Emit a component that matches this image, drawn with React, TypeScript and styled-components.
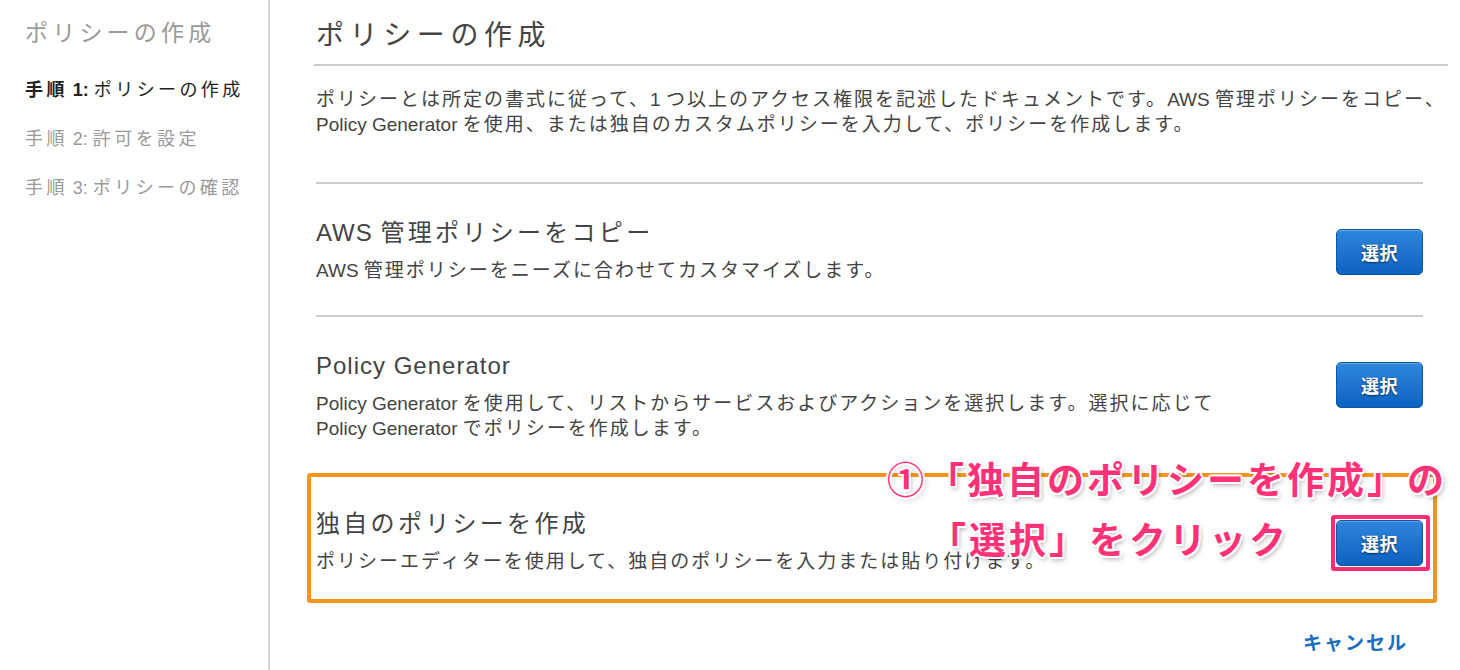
import * as React from 'react'
import styled, { createGlobalStyle, css } from 'styled-components'

const GlobalStyle = createGlobalStyle`
  body {
    margin: 0;
    background: #fff;
    font-family: 'Liberation Sans', 'Noto Sans CJK JP', sans-serif;
    color: #444;
  }
`

// Latin runs keep tight spacing, CJK runs are spread wider like the original rendering
const Latin = styled.span<{ spacing?: number }>`
  letter-spacing: ${({ spacing }) => spacing ?? 0}px;
`

function mixed(text: string, spacing?: number) {
  return text.split(/([\x20-\x7E]+)/).map((part, i) =>
    /^[\x20-\x7E]+$/.test(part) ? (
      <Latin key={i} spacing={spacing}>
        {part}
      </Latin>
    ) : (
      part
    )
  )
}

const Page = styled.div`
  position: relative;
  display: flex;
  width: 1460px;
  min-height: 670px;
  overflow: hidden;
`

const Sidebar = styled.nav`
  flex: 0 0 270px;
  border-right: 2px solid #d4d4d4;
  padding: 16px 0 0 25px;
  box-sizing: border-box;
`

const SidebarTitle = styled.div`
  font-size: 23px;
  line-height: 34px;
  letter-spacing: 4.2px;
  color: #9a9a9a;
`

const StepList = styled.ol`
  list-style: none;
  margin: 25px 0 0;
  padding: 0;
  display: flex;
  flex-direction: column;
  gap: 19px;
`

const Step = styled.li<{ active?: boolean }>`
  font-size: 18px;
  line-height: 30px;
  letter-spacing: 3.4px;
  color: ${({ active }) => (active ? '#222' : '#9a9a9a')};

  b {
    font-weight: 700;
  }
`

const Main = styled.main`
  flex: 1;
  padding: 18px 12px 0 44px;
  display: flex;
  flex-direction: column;
`

const Title = styled.h1`
  margin: 0;
  padding: 0 0 10px 2px;
  font-size: 28px;
  line-height: 36px;
  font-weight: 400;
  letter-spacing: 5.6px;
  color: #444;
  border-bottom: 2px solid #ccc;
`

const Intro = styled.p`
  margin: 21px 0 0 2px;
  font-size: 19px;
  line-height: 25px;
  letter-spacing: 2px;
  color: #444;
`

const Sections = styled.div`
  margin: 45px 25px 0 2px;
  display: flex;
  flex-direction: column;
`

const Section = styled.section<{ highlighted?: boolean }>`
  position: relative;
  display: flex;
  align-items: flex-start;
  gap: 20px;
  padding: 34px 0 32px;
  border-top: 2px solid #ccc;

  ${({ highlighted }) =>
    highlighted &&
    css`
      &::after {
        content: '';
        position: absolute;
        top: -2px;
        bottom: 3px;
        left: -9px;
        right: -14px;
        border: 4px solid #f7941e;
        border-radius: 3px;
        pointer-events: none;
      }
    `}
`

const SectionText = styled.div`
  flex: 1;
`

const SectionTitle = styled.h2`
  margin: 0 0 10px;
  font-size: 24px;
  line-height: 30px;
  font-weight: 400;
  letter-spacing: 3.3px;
  color: #444;
`

const SectionDesc = styled.p`
  margin: 0;
  font-size: 19px;
  line-height: 25px;
  letter-spacing: 2px;
  color: #444;
`

const ButtonFrame = styled.div<{ highlighted?: boolean }>`
  position: relative;
  flex: 0 0 auto;
  margin-top: 11px;

  ${({ highlighted }) =>
    highlighted &&
    css`
      &::before {
        content: '';
        position: absolute;
        top: -5px;
        bottom: -5px;
        left: -5px;
        right: -7px;
        border: 4px solid #ff2d78;
        border-radius: 3px;
      }
    `}
`

const SelectButton = styled.button`
  position: relative;
  display: block;
  width: 87px;
  height: 46px;
  border: 1px solid #0b56a8;
  border-radius: 5px;
  background: linear-gradient(#2f86dc, #0d62c0);
  box-shadow: inset 0 1px 0 rgba(255, 255, 255, 0.25);
  color: #fff;
  font-family: 'Liberation Sans', 'Noto Sans CJK JP', sans-serif;
  font-size: 18px;
  font-weight: 700;
  letter-spacing: 0.5px;
  text-shadow: 0 1px 2px rgba(0, 0, 0, 0.6);
  cursor: pointer;
`

const Footer = styled.div`
  display: flex;
  justify-content: flex-end;
  margin: 25px 40px 0 0;
`

const CancelLink = styled.a`
  font-size: 19px;
  line-height: 26px;
  font-weight: 700;
  letter-spacing: 2px;
  color: #1a6fc1;
  text-decoration: none;
  cursor: pointer;
`

const Annotation = styled.div`
  position: absolute;
  top: 452px;
  left: 887px;
  display: flex;
  flex-direction: column;
  pointer-events: none;
`

const AnnotationLine = styled.div<{ indent?: number }>`
  padding-left: ${({ indent }) => indent ?? 0}px;
  font-size: 37px;
  line-height: 60px;
  font-weight: 700;
  letter-spacing: 3px;
  white-space: nowrap;
  color: #ff3278;
  text-shadow:
    2px 0 0 #fff, -2px 0 0 #fff, 0 2px 0 #fff, 0 -2px 0 #fff,
    1.5px 1.5px 0 #fff, -1.5px -1.5px 0 #fff, 1.5px -1.5px 0 #fff, -1.5px 1.5px 0 #fff,
    2px 3px 5px rgba(0, 0, 0, 0.35);
`

const options = [
  {
    title: 'AWS 管理ポリシーをコピー',
    desc: ['AWS 管理ポリシーをニーズに合わせてカスタマイズします。']
  },
  {
    title: 'Policy Generator',
    desc: [
      'Policy Generator を使用して、リストからサービスおよびアクションを選択します。選択に応じて',
      'Policy Generator でポリシーを作成します。'
    ]
  },
  {
    title: '独自のポリシーを作成',
    desc: ['ポリシーエディターを使用して、独自のポリシーを入力または貼り付けます。'],
    highlighted: true
  }
]

export default function App() {
  return (
    <>
      <GlobalStyle />
      <Page>
        <Sidebar>
          <SidebarTitle>ポリシーの作成</SidebarTitle>
          <StepList>
            <Step active>
              <b>手順{mixed(' 1:')}</b>
              {mixed(' ')}ポリシーの作成
            </Step>
            <Step>手順{mixed(' 2: ')}許可を設定</Step>
            <Step>手順{mixed(' 3: ')}ポリシーの確認</Step>
          </StepList>
        </Sidebar>

        <Main>
          <Title>ポリシーの作成</Title>
          <Intro>
            {mixed('ポリシーとは所定の書式に従って、1 つ以上のアクセス権限を記述したドキュメントです。AWS 管理ポリシーをコピー、')}
            <br />
            {mixed('Policy Generator を使用、または独自のカスタムポリシーを入力して、ポリシーを作成します。')}
          </Intro>

          <Sections>
            {options.map((o) => (
              <Section key={o.title} highlighted={o.highlighted}>
                <SectionText>
                  <SectionTitle>{mixed(o.title, 1)}</SectionTitle>
                  <SectionDesc>
                    {o.desc.map((line, i) => (
                      <React.Fragment key={i}>
                        {i > 0 && <br />}
                        {mixed(line)}
                      </React.Fragment>
                    ))}
                  </SectionDesc>
                </SectionText>
                <ButtonFrame highlighted={o.highlighted}>
                  <SelectButton>選択</SelectButton>
                </ButtonFrame>
              </Section>
            ))}
          </Sections>

          <Footer>
            <CancelLink>キャンセル</CancelLink>
          </Footer>
        </Main>

        <Annotation>
          <AnnotationLine>①「独自のポリシーを作成」の</AnnotationLine>
          <AnnotationLine indent={42}>「選択」をクリック</AnnotationLine>
        </Annotation>
      </Page>
    </>
  )
}
